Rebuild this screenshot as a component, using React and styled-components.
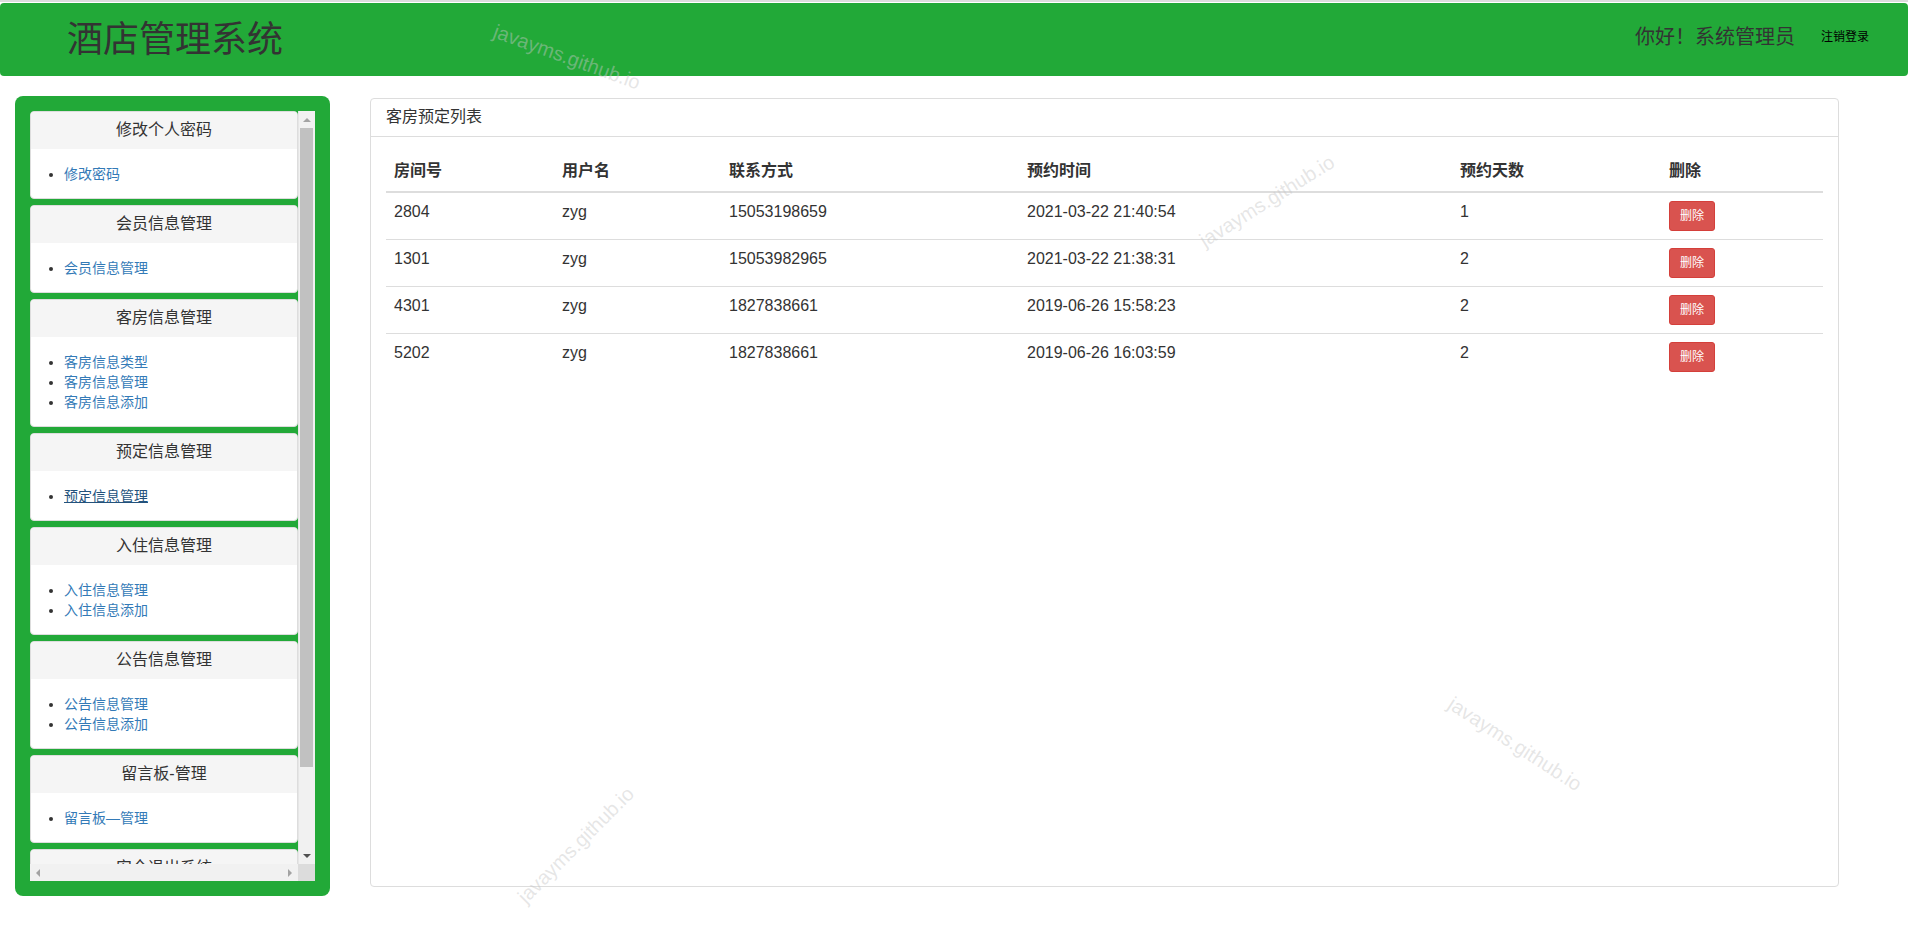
import React from 'react';
import styled, { createGlobalStyle } from 'styled-components';

const GREEN = '#22a938';
const FONT = '"Liberation Sans", "Noto Sans CJK SC", sans-serif';

const GlobalStyle = createGlobalStyle`
  html, body {
    margin: 0;
    padding: 0;
    background: #fff;
  }
  body {
    font-family: ${FONT};
    font-size: 14px;
    line-height: 1.42857;
    color: #333;
  }
  * {
    box-sizing: border-box;
  }
`;

const menu = [
  { title: '修改个人密码', links: ['修改密码'] },
  { title: '会员信息管理', links: ['会员信息管理'] },
  { title: '客房信息管理', links: ['客房信息类型', '客房信息管理', '客房信息添加'] },
  { title: '预定信息管理', links: ['预定信息管理'], active: 0 },
  { title: '入住信息管理', links: ['入住信息管理', '入住信息添加'] },
  { title: '公告信息管理', links: ['公告信息管理', '公告信息添加'] },
  { title: '留言板-管理', links: ['留言板—管理'] },
  { title: '安全退出系统', links: ['安全退出'] },
];

const bookings = [
  { room: '2804', user: 'zyg', phone: '15053198659', time: '2021-03-22 21:40:54', days: 1 },
  { room: '1301', user: 'zyg', phone: '15053982965', time: '2021-03-22 21:38:31', days: 2 },
  { room: '4301', user: 'zyg', phone: '1827838661', time: '2019-06-26 15:58:23', days: 2 },
  { room: '5202', user: 'zyg', phone: '1827838661', time: '2019-06-26 16:03:59', days: 2 },
];

const marks = [
  { x: 567, y: 57, angle: 20 },
  { x: 1267, y: 201, angle: -32 },
  { x: 1515, y: 744, angle: 33 },
  { x: 576, y: 845, angle: -45 },
];

export default function App() {
  return (
    <Page>
      <GlobalStyle />
      <TopRule />
      <Header>
        <Brand>酒店管理系统</Brand>
        <UserBar>
          <Greeting>你好！系统管理员</Greeting>
          <Logout>注销登录</Logout>
        </UserBar>
      </Header>

      <Layout>
        <Sidebar>
          <Viewport>
            <PanelList>
              {menu.map(group => (
                <SidePanel key={group.title}>
                  <SideHeading>{group.title}</SideHeading>
                  <SideBody>
                    <LinkList>
                      {group.links.map((link, i) => (
                        <li key={link}>
                          <MenuLink href="#" $active={group.active === i}>
                            {link}
                          </MenuLink>
                        </li>
                      ))}
                    </LinkList>
                  </SideBody>
                </SidePanel>
              ))}
            </PanelList>
          </Viewport>

          <VScroll>
            <ArrowBox>
              <Arrow $dir="up" $color="#a3a3a3" />
            </ArrowBox>
            <VThumb />
            <VTrack />
            <ArrowBox>
              <Arrow $dir="down" $color="#505050" />
            </ArrowBox>
          </VScroll>

          <HScroll>
            <ArrowBox>
              <Arrow $dir="left" $color="#a3a3a3" />
            </ArrowBox>
            <HTrack />
            <ArrowBox>
              <Arrow $dir="right" $color="#a3a3a3" />
            </ArrowBox>
          </HScroll>
          <Corner />
        </Sidebar>

        <MainPanel>
          <MainHeading>客房预定列表</MainHeading>
          <MainBody>
            <Table>
              <colgroup>
                <col style={{ width: 168 }} />
                <col style={{ width: 167 }} />
                <col style={{ width: 298 }} />
                <col style={{ width: 433 }} />
                <col style={{ width: 209 }} />
                <col />
              </colgroup>
              <thead>
                <tr>
                  <Th>房间号</Th>
                  <Th>用户名</Th>
                  <Th>联系方式</Th>
                  <Th>预约时间</Th>
                  <Th>预约天数</Th>
                  <Th>删除</Th>
                </tr>
              </thead>
              <tbody>
                {bookings.map(b => (
                  <Row key={b.room + b.time}>
                    <Td>{b.room}</Td>
                    <Td>{b.user}</Td>
                    <Td>{b.phone}</Td>
                    <Td>{b.time}</Td>
                    <Td>{b.days}</Td>
                    <Td>
                      <DeleteButton type="button">删除</DeleteButton>
                    </Td>
                  </Row>
                ))}
              </tbody>
            </Table>
          </MainBody>
        </MainPanel>
      </Layout>

      {marks.map(m => (
        <Watermark key={m.x} $x={m.x} $y={m.y} $angle={m.angle}>
          javayms.github.io
        </Watermark>
      ))}
    </Page>
  );
}

const Page = styled.div`
  position: relative;
  min-height: 935px;
  overflow: hidden;
`;

const TopRule = styled.div`
  height: 2px;
  background: #dcdcdc;
`;

const Header = styled.header`
  margin-top: 1px;
  height: 73px;
  background: ${GREEN};
  border-radius: 4px;
  display: flex;
  align-items: center;
  justify-content: space-between;
  padding: 0 39px 0 67px;
`;

const Brand = styled.h1`
  margin: 0;
  font-size: 36px;
  font-weight: 400;
  line-height: 1;
  color: #333;
`;

const UserBar = styled.div`
  display: flex;
  align-items: center;
  gap: 26px;
  padding-bottom: 4px;
`;

const Greeting = styled.span`
  font-size: 20px;
  color: #333;
`;

const Logout = styled.a`
  font-size: 12px;
  color: #000;
  cursor: pointer;
`;

const Layout = styled.div`
  display: flex;
  align-items: flex-start;
  padding: 20px 0 0 15px;
`;

const Sidebar = styled.aside`
  width: 315px;
  height: 800px;
  flex-shrink: 0;
  background: ${GREEN};
  border-radius: 8px;
  padding: 15px;
  display: grid;
  grid-template-columns: 1fr 17px;
  grid-template-rows: 1fr 17px;
`;

const Viewport = styled.div`
  overflow: hidden;
  min-height: 0;
`;

const PanelList = styled.div`
  display: flex;
  flex-direction: column;
  gap: 6px;
`;

const SidePanel = styled.section`
  background: #fff;
  border: 1px solid #ddd;
  border-radius: 4px;
  overflow: hidden;
  flex-shrink: 0;
`;

const SideHeading = styled.h3`
  margin: 0;
  height: 37px;
  background: #f5f5f5;
  display: flex;
  align-items: center;
  justify-content: center;
  font-size: 16px;
  font-weight: 400;
  color: #333;
`;

const SideBody = styled.div`
  padding: 15px 15px 14px;
`;

const LinkList = styled.ul`
  margin: 0;
  padding-left: 18px;
  li {
    line-height: 20px;
  }
`;

const MenuLink = styled.a`
  font-size: 14px;
  color: ${p => (p.$active ? '#23527c' : '#337ab7')};
  text-decoration: ${p => (p.$active ? 'underline' : 'none')};
`;

const VScroll = styled.div`
  background: #f1f1f1;
  border-left: 1px solid #e6e6e6;
  display: flex;
  flex-direction: column;
  min-height: 0;
`;

const HScroll = styled.div`
  background: #f1f1f1;
  display: flex;
`;

const Corner = styled.div`
  background: #dcdcdc;
`;

const ArrowBox = styled.div`
  width: 16px;
  height: 17px;
  flex-shrink: 0;
  display: flex;
  align-items: center;
  justify-content: center;
`;

const Arrow = styled.span`
  width: 0;
  height: 0;
  border: 4px solid transparent;
  ${p =>
    ({
      up: `border-bottom-color: ${p.$color}; border-top-width: 0;`,
      down: `border-top-color: ${p.$color}; border-bottom-width: 0;`,
      left: `border-right-color: ${p.$color}; border-left-width: 0;`,
      right: `border-left-color: ${p.$color}; border-right-width: 0;`,
    })[p.$dir]}
`;

const VThumb = styled.div`
  height: 639px;
  margin: 0 2px 0 1px;
  background: #c1c1c1;
  flex-shrink: 0;
`;

const VTrack = styled.div`
  flex: 1;
`;

const HTrack = styled.div`
  flex: 1;
`;

const MainPanel = styled.main`
  margin: 2px 0 0 40px;
  width: 1469px;
  height: 789px;
  background: #fff;
  border: 1px solid #ddd;
  border-radius: 4px;
`;

const MainHeading = styled.div`
  height: 38px;
  padding: 0 15px;
  display: flex;
  align-items: center;
  border-bottom: 1px solid #ddd;
  font-size: 16px;
  color: #333;
`;

const MainBody = styled.div`
  padding: 15px;
`;

const Table = styled.table`
  width: 100%;
  table-layout: fixed;
  border-collapse: collapse;
  font-size: 16px;
  line-height: 1.42857;
  color: #333;
`;

const Th = styled.th`
  text-align: left;
  padding: 8px;
  font-weight: 700;
  vertical-align: bottom;
  border-bottom: 2px solid #ddd;
`;

const Row = styled.tr`
  & + & td {
    border-top: 1px solid #ddd;
  }
`;

const Td = styled.td`
  padding: 8px;
  vertical-align: top;
`;

const DeleteButton = styled.button`
  display: inline-block;
  vertical-align: top;
  padding: 5px 10px;
  font-family: ${FONT};
  font-size: 12px;
  line-height: 1.5;
  color: #fff;
  background: #d9534f;
  border: 1px solid #d43f3a;
  border-radius: 3px;
  cursor: pointer;
`;

const Watermark = styled.span`
  position: absolute;
  left: ${p => p.$x}px;
  top: ${p => p.$y}px;
  transform: translate(-50%, -50%) rotate(${p => p.$angle}deg);
  font-family: ${FONT};
  font-size: 20px;
  white-space: nowrap;
  color: rgba(200, 200, 200, 0.45);
  pointer-events: none;
`;
